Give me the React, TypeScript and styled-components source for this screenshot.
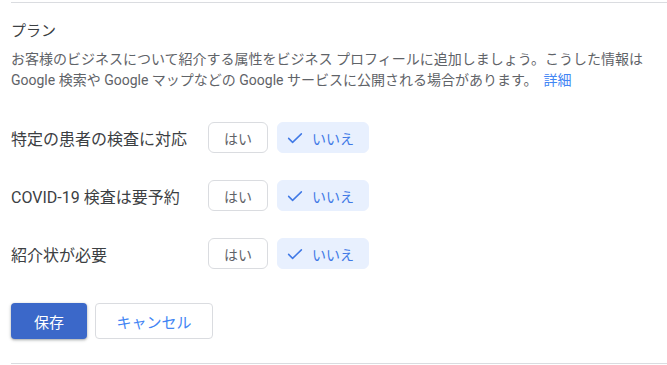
import React, { useState } from "react";
import styled, { createGlobalStyle } from "styled-components";

const GlobalStyle = createGlobalStyle`
  html, body {
    margin: 0;
    padding: 0;
    background: #fff;
  }
  body {
    font-family: Roboto, "Noto Sans CJK JP", sans-serif;
    -webkit-font-smoothing: antialiased;
  }
`;

type Attribute = {
  id: string;
  label: string;
  value: boolean;
};

const initial: Attribute[] = [
  { id: "patients", label: "特定の患者の検査に対応", value: false },
  { id: "covid", label: "COVID-19 検査は要予約", value: false },
  { id: "referral", label: "紹介状が必要", value: false },
];

const Check = () => (
  <svg width="18" height="18" viewBox="0 0 24 24" fill="none">
    <path
      d="M3.5 12.5l5.3 5.3L20.5 6.5"
      stroke="currentColor"
      strokeWidth="2"
      strokeLinecap="round"
      strokeLinejoin="round"
    />
  </svg>
);

const App = () => {
  const [attrs, setAttrs] = useState(initial);

  const setValue = (id: string, value: boolean) =>
    setAttrs((prev) => prev.map((a) => (a.id === id ? { ...a, value } : a)));

  return (
    <>
      <GlobalStyle />
      <Panel>
        <Title>プラン</Title>
        <Description>
          <span>
            お客様のビジネスについて紹介する属性をビジネス プロフィールに追加しましょう。こうした情報は
          </span>{" "}
          <span>Google 検索や Google マップなどの Google サービスに公開される場合があります。</span>
          <MoreLink href="#">詳細</MoreLink>
        </Description>
        <Rows>
          {attrs.map((a) => (
            <Row key={a.id}>
              <Label>{a.label}</Label>
              <Choices>
                <Choice $selected={a.value} $w={60} onClick={() => setValue(a.id, true)}>
                  {a.value && <Check />}
                  はい
                </Choice>
                <Choice $selected={!a.value} $w={92} onClick={() => setValue(a.id, false)}>
                  {!a.value && <Check />}
                  いいえ
                </Choice>
              </Choices>
            </Row>
          ))}
        </Rows>
        <Actions>
          <PrimaryButton>保存</PrimaryButton>
          <SecondaryButton>キャンセル</SecondaryButton>
        </Actions>
      </Panel>
    </>
  );
};

export default App;

const Panel = styled.section`
  margin-left: 11px;
  padding-top: 18px;
  padding-bottom: 24px;
  border-top: 1px solid #dadce0;
  border-bottom: 1px solid #dadce0;
  margin-top: 2px;
  width: 656px;
`;

const Title = styled.h2`
  margin: 0;
  font-size: 15px;
  line-height: 20px;
  font-weight: 400;
  color: #3c4043;
`;

const Description = styled.p`
  margin: 8px 0 0;
  font-size: 14px;
  line-height: 21px;
  color: #5f6368;
`;

const MoreLink = styled.a`
  margin-left: 6px;
  color: #4285f4;
  text-decoration: none;
`;

const Rows = styled.div`
  margin-top: 31px;
  display: flex;
  flex-direction: column;
  gap: 27px;
`;

const Row = styled.div`
  display: flex;
  align-items: center;
`;

const Label = styled.div`
  width: 197px;
  font-size: 16px;
  color: #3c4043;
`;

const Choices = styled.div`
  display: flex;
  gap: 9px;
`;

const Choice = styled.button<{ $selected: boolean; $w: number }>`
  width: ${(p) => p.$w}px;
  height: 31px;
  box-sizing: border-box;
  display: flex;
  align-items: center;
  justify-content: ${(p) => (p.$selected ? "flex-start" : "center")};
  gap: 8px;
  padding: 0 0 0 ${(p) => (p.$selected ? "8px" : "0")};
  border-radius: 6px;
  font-family: inherit;
  font-size: 14px;
  cursor: pointer;
  border: 1px solid ${(p) => (p.$selected ? "#e8f0fe" : "#dadce0")};
  background: ${(p) => (p.$selected ? "#e8f0fe" : "#fff")};
  color: ${(p) => (p.$selected ? "#4079e6" : "#5f6368")};
`;

const Actions = styled.div`
  margin-top: 34px;
  display: flex;
  gap: 8px;
`;

const PrimaryButton = styled.button`
  width: 76px;
  height: 36px;
  border: none;
  border-radius: 4px;
  background: #3b68c9;
  color: #fff;
  font-family: inherit;
  font-size: 15px;
  box-shadow: 0 1px 2px rgba(60, 64, 67, 0.3), 0 1px 3px 1px rgba(60, 64, 67, 0.15);
  cursor: pointer;
`;

const SecondaryButton = styled.button`
  width: 118px;
  height: 36px;
  box-sizing: border-box;
  border: 1px solid #dadce0;
  border-radius: 4px;
  background: #fff;
  color: #4285f4;
  font-family: inherit;
  font-size: 15px;
  cursor: pointer;
`;
